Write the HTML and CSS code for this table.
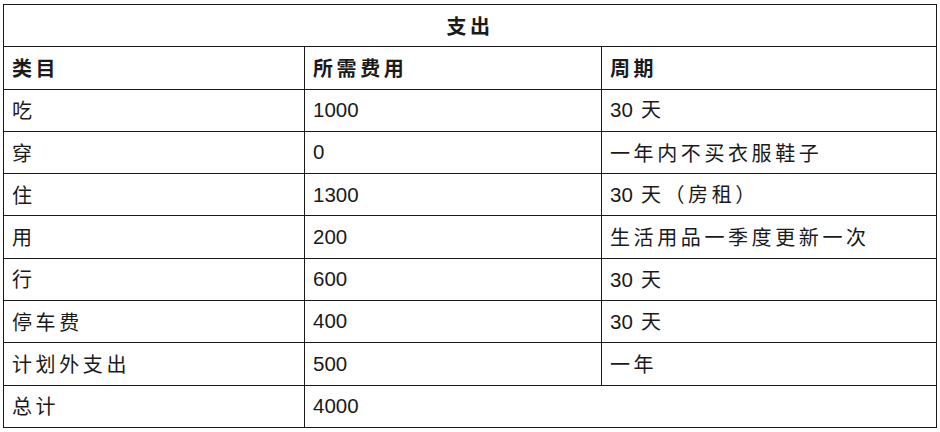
FILE: index.html
```html
<!DOCTYPE html>
<html lang="zh">
<head>
<meta charset="utf-8">
<link rel="stylesheet" href="styles.css">
</head>
<body>
<table class="sheet">
  <colgroup>
    <col class="c1"><col class="c2"><col class="c3">
  </colgroup>
  <tr><th colspan="3" class="title">支出</th></tr>
  <tr class="head"><th>类目</th><th>所需费用</th><th>周期</th></tr>
  <tr><td>吃</td><td class="num">1000</td><td><span class="num">30</span> 天</td></tr>
  <tr><td>穿</td><td class="num">0</td><td>一年内不买衣服鞋子</td></tr>
  <tr><td>住</td><td class="num">1300</td><td><span class="num">30</span> 天（房租）</td></tr>
  <tr><td>用</td><td class="num">200</td><td>生活用品一季度更新一次</td></tr>
  <tr><td>行</td><td class="num">600</td><td><span class="num">30</span> 天</td></tr>
  <tr><td>停车费</td><td class="num">400</td><td><span class="num">30</span> 天</td></tr>
  <tr><td>计划外支出</td><td class="num">500</td><td>一年</td></tr>
  <tr><td>总计</td><td class="num" colspan="2">4000</td></tr>
</table>
</body>
</html>
```

FILE: styles.css
```css
html, body {
  margin: 0;
  padding: 0;
  background: #fff;
}
body {
  padding: 4px 0 0 3px;
}
.sheet {
  border-collapse: collapse;
  table-layout: fixed;
  width: 933px;
  font-family: "Noto Sans CJK SC", "Liberation Sans", sans-serif;
  font-size: 20px;
  color: #1a1a1a;
}
.c1 { width: 301px; }
.c2 { width: 297px; }
.c3 { width: 335px; }
.sheet th, .sheet td {
  border: 1px solid #1a1a1a;
  height: 41.3px;
  padding: 0 0 0 8px;
  text-align: left;
  vertical-align: middle;
  letter-spacing: 3.6px;
  white-space: nowrap;
  line-height: 1;
}
.sheet th {
  font-weight: 700;
}
.sheet th.title {
  text-align: center;
  padding: 0;
}
.sheet .num {
  font-family: "Liberation Sans", sans-serif;
  font-size: 20.5px;
  letter-spacing: 0;
}
```
